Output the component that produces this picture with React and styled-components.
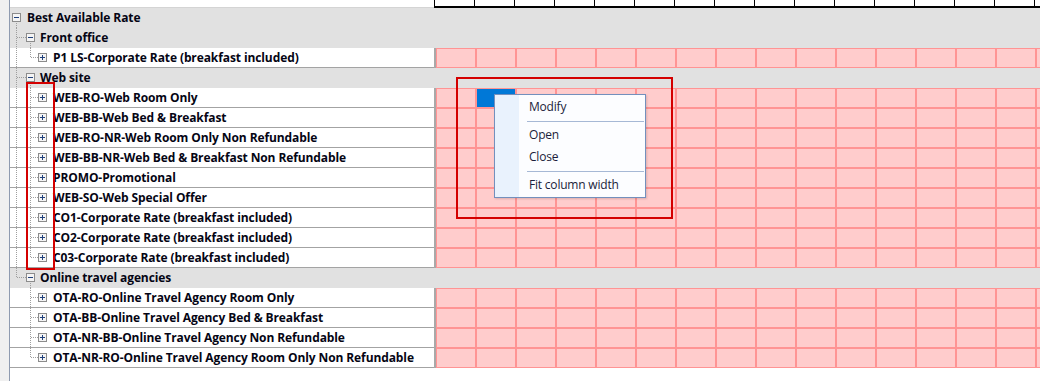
import React from "react";
import styled, { createGlobalStyle } from "styled-components";

const Global = createGlobalStyle`
  html, body { margin: 0; padding: 0; background: #ffffff; }
  body { font-family: "Open Sans", "Noto Sans", "DejaVu Sans", sans-serif; }
  #root { width: 1040px; height: 381px; overflow: hidden; }
`;

const Frame = styled.div`
  position: relative;
  display: flex;
  width: 1040px;
  height: 381px;
  overflow: hidden;
  background: #ffffff;
`;

const Strip = styled.div`
  flex: 0 0 9px;
  background: #f0f0f0;
  border-right: 1px solid #8f9bb0;
`;

const Main = styled.div`
  flex: 1;
  display: flex;
  flex-direction: column;
  min-width: 0;
`;

const HeaderRow = styled.div`
  display: flex;
  height: 8px;
  flex: 0 0 8px;
`;

const HeaderTree = styled.div`
  flex: 0 0 424px;
  background: #ffffff;
  box-shadow: inset 0 -1px #d4d4d4;
`;

const HeaderCell = styled.div`
  flex: 0 0 40px;
  box-sizing: border-box;
  border-left: 1px solid #000;
  border-bottom: 2px solid #000;
`;

const Row = styled.div`
  display: flex;
  height: 20px;
  flex: 0 0 20px;
  background: ${(p) => (p.$group ? "#e1e1e1" : "#ffffff")};
`;

const TreeCell = styled.div`
  flex: 0 0 426px;
  box-sizing: border-box;
  display: flex;
  align-items: center;
  height: 20px;
  ${(p) =>
    p.$group
      ? ""
      : `border-right: 2px solid #a9a9a9; box-shadow: inset 0 -1px #a3a3a3;`}
`;

const Label = styled.span`
  font-weight: 700;
  font-size: 12px;
  line-height: 20px;
  color: #050514;
  white-space: nowrap;
  letter-spacing: -0.1px;
`;

const Cells = styled.div`
  display: flex;
`;

const Cell = styled.div`
  flex: 0 0 40px;
  height: 20px;
  box-sizing: border-box;
  border: 1px solid #ff9494;
  background: ${(p) => (p.$selected ? "#0078d7" : "#ffcccc")};
`;

const Annotation = styled.div`
  position: absolute;
  box-sizing: border-box;
  border: 2px solid #d40000;
  pointer-events: none;
`;

const Menu = styled.div`
  position: absolute;
  left: 494px;
  top: 94px;
  width: 152px;
  box-sizing: border-box;
  border: 1px solid #7390bd;
  background: linear-gradient(to right, #e9f2fd 0, #e9f2fd 24px, #fcfdff 24px);
  padding: 1px 0;
  box-shadow: 1px 1px 2px rgba(0, 0, 0, 0.15);
`;

const MenuItem = styled.div`
  height: 22px;
  line-height: 22px;
  padding-left: 34px;
  font-size: 12px;
  color: #1b1d3a;
  font-family: "Open Sans", "Noto Sans", sans-serif;
  letter-spacing: -0.2px;
`;

const MenuSep = styled.div`
  height: 6px;
  display: flex;
  align-items: center;
  padding-left: 32px;
  padding-right: 1px;
  &::after {
    content: "";
    flex: 1;
    height: 1px;
    background: #a6b8d5;
  }
`;

const DOT = "#9e9e9e";

function Dotted({ x1, y1, x2, y2 }) {
  return (
    <line
      x1={x1}
      y1={y1}
      x2={x2}
      y2={y2}
      stroke={DOT}
      strokeWidth="1"
      strokeDasharray="1 1"
      shapeRendering="crispEdges"
    />
  );
}

function Expander({ x, open }) {
  return (
    <g shapeRendering="crispEdges">
      <rect x={x + 0.5} y={5.5} width="8" height="8" fill="#f4f4f4" stroke="#8c8c8c" />
      <line x1={x + 2} y1={9.5} x2={x + 7} y2={9.5} stroke="#1e3f7a" />
      {!open && <line x1={x + 4.5} y1={7} x2={x + 4.5} y2={12} stroke="#1e3f7a" />}
    </g>
  );
}

function TreeGlyph({ level, lastChild, parentLast }) {
  const width = level === 0 ? 17 : level === 1 ? 30 : 43;
  return (
    <svg width={width} height="20" style={{ flex: `0 0 ${width}px`, display: "block" }}>
      {level === 0 && (
        <>
          <Dotted x1={6.5} y1={15} x2={6.5} y2={20} />
          <Expander x={2} open />
        </>
      )}
      {level === 1 && (
        <>
          <Dotted x1={6.5} y1={0} x2={6.5} y2={lastChild ? 10 : 20} />
          <Dotted x1={7} y1={9.5} x2={16} y2={9.5} />
          <Dotted x1={20.5} y1={15} x2={20.5} y2={20} />
          <Expander x={16} open />
        </>
      )}
      {level === 2 && (
        <>
          {!parentLast && <Dotted x1={6.5} y1={0} x2={6.5} y2={20} />}
          <Dotted x1={20.5} y1={0} x2={20.5} y2={lastChild ? 10 : 20} />
          <Dotted x1={21} y1={9.5} x2={28} y2={9.5} />
          <Expander x={28} open={false} />
        </>
      )}
    </svg>
  );
}

const groups = [
  { label: "Front office", items: ["P1 LS-Corporate Rate (breakfast included)"] },
  {
    label: "Web site",
    items: [
      "WEB-RO-Web Room Only",
      "WEB-BB-Web Bed & Breakfast",
      "WEB-RO-NR-Web Room Only Non Refundable",
      "WEB-BB-NR-Web Bed & Breakfast Non Refundable",
      "PROMO-Promotional",
      "WEB-SO-Web Special Offer",
      "CO1-Corporate Rate (breakfast included)",
      "CO2-Corporate Rate (breakfast included)",
      "C03-Corporate Rate (breakfast included)",
    ],
  },
  {
    label: "Online travel agencies",
    items: [
      "OTA-RO-Online Travel Agency Room Only",
      "OTA-BB-Online Travel Agency Bed & Breakfast",
      "OTA-NR-BB-Online Travel Agency Non Refundable",
      "OTA-NR-RO-Online Travel Agency Room Only Non Refundable",
    ],
  },
];

const rows = [{ label: "Best Available Rate", level: 0, group: true }];
groups.forEach((g, gi) => {
  const gLast = gi === groups.length - 1;
  rows.push({ label: g.label, level: 1, group: true, lastChild: gLast });
  g.items.forEach((it, ii) => {
    rows.push({
      label: it,
      level: 2,
      group: false,
      lastChild: ii === g.items.length - 1,
      parentLast: gLast,
    });
  });
});

const COLS = 16;

export default function App() {
  return (
    <>
      <Global />
      <Frame>
        <Strip />
        <Main>
          <HeaderRow>
            <HeaderTree />
            {Array.from({ length: COLS }).map((_, i) => (
              <HeaderCell key={i} />
            ))}
          </HeaderRow>
          {rows.map((r, ri) => (
            <Row key={ri} $group={r.group}>
              <TreeCell $group={r.group}>
                <TreeGlyph level={r.level} lastChild={r.lastChild} parentLast={r.parentLast} />
                <Label>{r.label}</Label>
              </TreeCell>
              {!r.group && (
                <Cells>
                  {Array.from({ length: COLS }).map((_, ci) => (
                    <Cell key={ci} $selected={r.label === "WEB-RO-Web Room Only" && ci === 1} />
                  ))}
                </Cells>
              )}
            </Row>
          ))}
        </Main>
        <Annotation style={{ left: 456, top: 77, width: 217, height: 142 }} />
        <Annotation style={{ left: 26, top: 82, width: 29, height: 188 }} />
        <Menu>
          <MenuItem>Modify</MenuItem>
          <MenuSep />
          <MenuItem>Open</MenuItem>
          <MenuItem>Close</MenuItem>
          <MenuSep />
          <MenuItem>Fit column width</MenuItem>
        </Menu>
      </Frame>
    </>
  );
}
